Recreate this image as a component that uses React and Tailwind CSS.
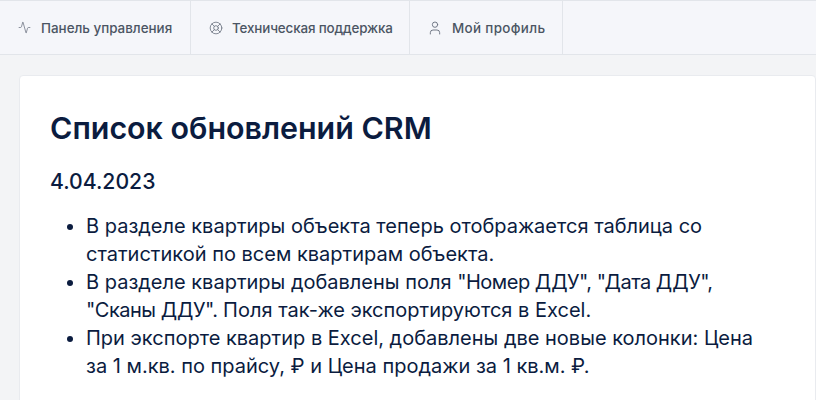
import React from "react";
import { Activity, LifeBuoy, User } from "lucide-react";

const tabs = [
  { label: "Панель управления", Icon: Activity, size: 13, w: "w-[191px]", text: "", gap: "gap-[10px] pl-[18px]" },
  { label: "Техническая поддержка", Icon: LifeBuoy, size: 14, w: "w-[219px]", text: "tracking-[-0.14px]", gap: "gap-[9px] pl-[18px]" },
  { label: "Мой профиль", Icon: User, size: 16, w: "w-[153px]", text: "tracking-[0.36px]", gap: "gap-[9px] pl-[17px]" },
];

export default function App() {
  return (
    <div className="h-[400px] w-[816px] overflow-hidden bg-[#f3f4f6] font-['Inter',sans-serif]">
      <nav className="flex h-[55px] border-y border-[#e2e5ea] bg-[#f5f6fa]">
        {tabs.map(({ label, Icon, size, w, text, gap }) => (
          <a key={label} className={`flex items-center border-r border-[#e2e5ea] text-[13.4px] font-medium text-[#4b5563] ${gap} ${w}`}>
            <Icon size={size} strokeWidth={1.4} className="text-[#6b7280]" />
            <span className={`pt-px ${text}`}>{label}</span>
          </a>
        ))}
      </nav>
      <main className="ml-[19px] mt-5 rounded border border-[#e9ebef] bg-white pl-[30px] pt-[30px] text-[#0b1c3f]">
        <h1 className="text-[30.4px] font-semibold leading-[44px]">Список обновлений CRM</h1>
        <h2 className="mt-[15px] text-[21.2px] font-medium leading-[32px]">4.04.2023</h2>
        <ul className="mt-[15px] w-[712px] list-disc pl-[36px] text-[20px] leading-[28px] marker:text-[#0b1c3f]">
          <li>В разделе квартиры объекта теперь отображается таблица со статистикой по всем квартирам объекта.</li>
          <li>В разделе квартиры добавлены поля <span className="tracking-[-0.5px]">"Номер ДДУ", "Дата ДДУ", "Сканы ДДУ".</span> Поля так-же экспортируются в Excel.</li>
          <li>При экспорте квартир в Excel, добавлены две новые колонки: Цена за 1 м.кв. по прайсу, ₽ и Цена продажи за 1 кв.м. ₽.</li>
        </ul>
        <div className="h-[40px]" />
      </main>
    </div>
  );
}
